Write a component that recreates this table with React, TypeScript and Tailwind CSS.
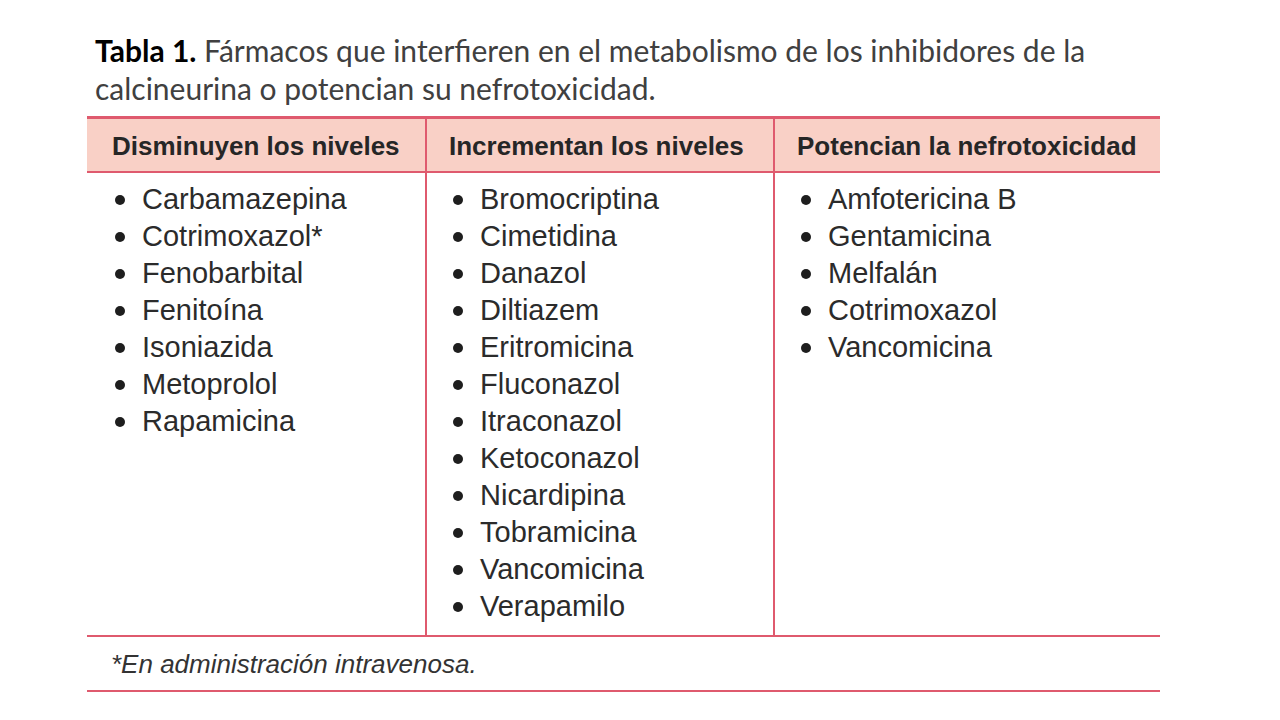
import React from "react";

const columns = [
  {
    title: "Disminuyen los niveles",
    width: "w-[338px]",
    items: ["Carbamazepina", "Cotrimoxazol*", "Fenobarbital", "Fenitoína", "Isoniazida", "Metoprolol", "Rapamicina"],
  },
  {
    title: "Incrementan los niveles",
    width: "w-[348px]",
    items: [
      "Bromocriptina",
      "Cimetidina",
      "Danazol",
      "Diltiazem",
      "Eritromicina",
      "Fluconazol",
      "Itraconazol",
      "Ketoconazol",
      "Nicardipina",
      "Tobramicina",
      "Vancomicina",
      "Verapamilo",
    ],
  },
  {
    title: "Potencian la nefrotoxicidad",
    width: "w-[387px]",
    items: ["Amfotericina B", "Gentamicina", "Melfalán", "Cotrimoxazol", "Vancomicina"],
  },
];

export default function App() {
  return (
    <div className="w-[1280px] h-[720px] bg-white overflow-hidden">
      <div className="pl-[95px] pt-[31px] text-[30px] leading-[38px] text-[#404040] font-['Lato',sans-serif]">
        <span className="font-bold text-black">Tabla 1.</span> Fármacos que interfieren en el metabolismo de los inhibidores de la
        <br />
        calcineurina o potencian su nefrotoxicidad.
      </div>

      <div className="ml-[87px] mt-[9px] w-[1073px] font-['Liberation_Sans',Arial,sans-serif] text-[#2b2b2b]">
        <div className="flex border-t-[3px] border-b-[2px] border-[#df5a6e] bg-[#f9d0c6]">
          {columns.map((c, i) => (
            <div
              key={c.title}
              className={`${c.width} h-[52px] flex items-center pt-[2px] text-[26px] font-bold text-[#262626] ${
                i > 0 ? "border-l-2 border-[#df5a6e] pl-[22px]" : "pl-[25px]"
              }`}
            >
              {c.title}
            </div>
          ))}
        </div>

        <div className="flex border-b-[2px] border-[#df5a6e]">
          {columns.map((c, i) => (
            <ul
              key={c.title}
              className={`${c.width} pt-[8px] pb-[10px] ${i > 0 ? "border-l-2 border-[#df5a6e] pl-[26px]" : "pl-[28px]"}`}
            >
              {c.items.map((it) => (
                <li key={it} className="flex items-center h-[37px] text-[29px]">
                  <span className="w-[10px] h-[10px] rounded-full bg-[#1e1e1e] mr-[17px] mt-[1px]" />
                  {it}
                </li>
              ))}
            </ul>
          ))}
        </div>

        <div className="h-[55px] flex items-center pl-[24px] pt-[2px] italic text-[26px] text-[#333] border-b-[2px] border-[#df5a6e]">
          *En administración intravenosa.
        </div>
      </div>
    </div>
  );
}
